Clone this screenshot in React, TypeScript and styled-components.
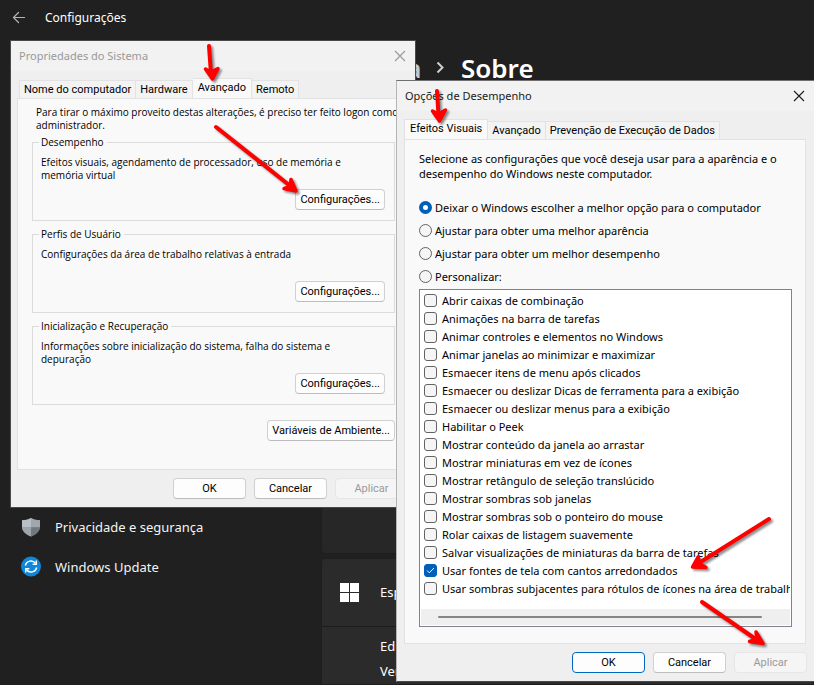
import React from "react";
import styled, { createGlobalStyle, css } from "styled-components";

const uiFont = '"Noto Sans", "Open Sans", sans-serif';
const compactFont = '"Open Sans", "Noto Sans", sans-serif';
const labelFont = 'Roboto, "Liberation Sans", sans-serif';

const GlobalStyle = createGlobalStyle`
  *, *::before, *::after { box-sizing: border-box; }
  html, body { margin: 0; background: #202020; }
  body { font-family: ${uiFont}; font-size: 11px; color: #000; }
  button, input { font: inherit; margin: 0; }
  p, h1, h2 { margin: 0; font-weight: 400; }
`;

/* ---------- desktop and settings app ---------- */

const Desktop = styled.div`
  position: relative;
  min-height: 100vh;
  overflow: hidden;
  background: #202020;
`;

const SettingsApp = styled.main`
  display: flex;
  flex-direction: column;
  height: 100vh;
  color: #fff;
`;

const SettingsBar = styled.header`
  display: flex;
  align-items: center;
  gap: 18px;
  height: 36px;
  padding-left: 11px;
`;

const BackButton = styled.button`
  display: flex;
  padding: 0;
  border: 0;
  background: none;
  color: #b4b4b4;
`;

const SettingsName = styled.h2`
  font-size: 12px;
  line-height: 16px;
`;

const SettingsBody = styled.div`
  display: grid;
  grid-template-columns: 321px 1fr;
  flex: 1;
  min-height: 0;
`;

const Sidebar = styled.nav`
  display: flex;
  flex-direction: column;
  padding: 471px 8px 0 20px;
`;

const NavLink = styled.a`
  display: flex;
  align-items: center;
  gap: 13px;
  height: 40px;
  color: #f4f4f4;
  font-size: 13px;
  text-decoration: none;
`;

const SettingsContent = styled.section`
  display: flex;
  flex-direction: column;
  min-width: 0;
  overflow: hidden;
`;

const Breadcrumb = styled.div`
  display: flex;
  align-items: center;
  height: 64px;
  font-size: 26px;
  font-weight: 600;
`;

const Crumb = styled.a`
  width: 96px;
  color: #c8c8c8;
  text-align: right;
  text-decoration: none;
`;

const CrumbArrow = styled.svg`
  margin: 0 16px 0 19px;
  color: #cfcfcf;
`;

const PageTitle = styled.h1`
  font-size: 26px;
  font-weight: 600;
`;

const Card = styled.div`
  background: #2b2b2b;
  border: 1px solid #1e1e1e;
  border-radius: 4px;
`;

const DeviceCard = styled(Card)`
  height: 457px;
  margin-bottom: 4px;
  background: #272727;
`;

const SpecCard = styled(Card)`
  flex: 1;
  border-radius: 4px 4px 0 0;
  font-size: 13px;
  line-height: 25px;
`;

const SpecHeader = styled.div`
  display: grid;
  grid-template-columns: 40px 1fr;
  align-items: center;
  height: 68px;
  padding-left: 18px;
  border-bottom: 1px solid #1c1c1c;
`;

const SpecList = styled.ul`
  margin: 0;
  padding: 7px 0 0 58px;
  list-style: none;
`;

/* ---------- classic dialogs ---------- */

const Dialog = styled.section`
  position: absolute;
  display: flex;
  flex-direction: column;
  border: 1px solid #8d8d8d;
  background: #efefef;
`;

const SystemDialog = styled(Dialog)`
  left: 10px;
  top: 40px;
  width: 406px;
  border-color: #4a4a4a;
`;

const PerformanceDialog = styled(Dialog)`
  left: 396px;
  right: -1px;
  top: 80px;
  border-color: #6f6f6f #4a4a4a #4a4a4a #b4b4b4;
`;

const TitleBar = styled.header<{ $inactive?: boolean }>`
  display: flex;
  align-items: center;
  justify-content: space-between;
  height: 30px;
  padding: 0 9px 0 8px;
  background: #f2f2f2;
  color: ${(p) => (p.$inactive ? "#999" : "#1a1a1a")};
`;

const DialogTitle = styled.h2`
  font-size: 11px;
  line-height: 16px;
`;

const CloseButton = styled.button`
  display: flex;
  padding: 0;
  border: 0;
  background: none;
  color: inherit;
`;

const TabRow = styled.div`
  display: flex;
  align-items: flex-end;
  padding: 7px 8px 0;
`;

const EffectsTabRow = styled(TabRow)`
  padding: 8px 7px 0;
`;

const Tab = styled.button<{ $selected?: boolean }>`
  height: 18px;
  padding: 0 4px;
  border: 1px solid #e2e2e2;
  border-left-width: 0;
  border-bottom: 0;
  background: #f3f3f3;
  color: #000;
  font-family: ${labelFont};
  font-size: 11px;
  line-height: 17px;
  white-space: nowrap;

  &:first-child { border-left-width: 1px; }

  ${(p) =>
    p.$selected &&
    css`
      height: 21px;
      margin-bottom: -1px;
      padding: 0 5px 3px;
      background: #f9f9f9;
    `}
`;

const TabPanel = styled.div`
  display: flex;
  flex-direction: column;
  border: 1px solid #e2e2e2;
  background: #f9f9f9;
`;

const SystemPanel = styled(TabPanel)`
  margin: 0 6px;
  padding: 6px 13px 28px 14px;
  font-family: ${compactFont};
  font-size: 10px;
  line-height: 13px;
`;

const AdminNote = styled.p`
  padding: 1px 0 4px 4px;
  white-space: nowrap;
`;

const Group = styled.fieldset`
  display: flex;
  flex-direction: column;
  min-width: 0;
  margin: 0 0 7px;
  padding: 7px 9px 10px 8px;
  border: 1px solid #dcdcdc;
`;

const GroupTitle = styled.legend`
  margin-left: -2px;
  padding: 0 3px 0 2px;
  line-height: 13px;
`;

const GroupText = styled.p`
  min-height: 33px;
  max-width: 310px;
`;

const PushButton = styled.button<{ $primary?: boolean }>`
  flex: none;
  align-self: flex-end;
  min-width: 73px;
  height: 21px;
  padding: 0 4px;
  border: 1px solid ${(p) => (p.$primary ? "#0067c0" : "#d0d0d0")};
  border-bottom-color: ${(p) => (p.$primary ? "#0067c0" : "#bcbcbc")};
  border-radius: 4px;
  background: #fdfdfd;
  color: #000;
  font-family: ${labelFont};
  font-size: 11px;
  line-height: 19px;
  white-space: nowrap;

  &:disabled {
    border-color: #e6e6e6;
    background: #f5f5f5;
    color: #9a9a9a;
  }
`;

const VariablesButton = styled(PushButton)`
  margin-top: 8px;
`;

const ButtonRow = styled.footer`
  display: flex;
  justify-content: flex-end;
  gap: 8px;
  padding: 8px 7px;
`;

const EffectsPanel = styled(TabPanel)`
  margin: 0 8px 0 7px;
  padding: 11px 13px 16px 14px;
`;

const Intro = styled.p`
  margin-bottom: 17px;
  line-height: 15px;
`;

const Options = styled.div`
  display: grid;
  gap: 5px;
  margin-bottom: 4px;
`;

const OptionLabel = styled.label`
  display: flex;
  align-items: center;
  gap: 3px;
  height: 18px;
  white-space: nowrap;
`;

const Radio = styled.input`
  appearance: none;
  flex: none;
  width: 13px;
  height: 13px;
  border: 1px solid #636363;
  border-radius: 50%;
  background: #f5f5f5;

  &:checked {
    border: 4px solid #005fb8;
    background: #fff;
  }
`;

const EffectList = styled.div`
  border: 1px solid #82828f;
  background: #fff;
`;

const EffectItems = styled.ul`
  margin: 0 1px 0 0;
  padding: 1px 0 12px 4px;
  overflow: hidden;
  list-style: none;
`;

const EffectLabel = styled(OptionLabel)`
  gap: 5px;
`;

const CheckFrame = styled.span`
  display: grid;
  flex: none;
  place-items: center;

  > * { grid-area: 1 / 1; }
`;

const Checkbox = styled.input`
  appearance: none;
  width: 13px;
  height: 13px;
  border: 1px solid #636363;
  border-radius: 3px;
  background: #f5f5f5;

  &:checked {
    border-color: #005fb8;
    background: #005fb8;
  }
`;

const CheckMark = styled.svg`
  pointer-events: none;
`;

const ScrollTrack = styled.div`
  display: flex;
  align-items: center;
  height: 16px;
  margin: 0 1px 1px;
  padding: 0 28px 0 17px;
  background: #efefef;
`;

const ScrollThumb = styled.div`
  flex: 1;
  height: 2px;
  border-radius: 1px;
  background: #858585;
`;

/* ---------- red marker arrows over the windows ---------- */

const MarkerLayer = styled.svg`
  position: absolute;
  left: 0;
  top: 0;
  pointer-events: none;
  filter: drop-shadow(2px 2px 1px rgba(0, 0, 0, 0.45));
`;

const markers = [
  { shaft: "M209 46 L211 74", head: "M205.5 69 L212.5 79 L218 68.5 L211 72 Z" },
  { shaft: "M216 127 L289 185", head: "M291 179.5 L296 191 L284 188.5 L290 186 Z" },
  { shaft: "M437 91 L438.5 116", head: "M432.5 111 L439.5 121 L445.5 110 L438.5 114 Z" },
  { shaft: "M769 519 L699 563", head: "M698 557 L692.5 567 L706 567.5 L700 564 Z" },
  { shaft: "M702 602 L757 640", head: "M756 632 L763 643.5 L749.5 641.5 L757 639 Z" },
];

const Markers = () => (
  <MarkerLayer width="814" height="685" viewBox="0 0 814 685" aria-hidden="true">
    {markers.map((m) => (
      <g key={m.shaft} stroke="#fe0000" strokeLinecap="round" strokeLinejoin="round">
        <path d={m.shaft} strokeWidth="4" fill="none" />
        <path d={m.head} strokeWidth="3.5" fill="#fe0000" />
      </g>
    ))}
  </MarkerLayer>
);

/* ---------- icons ---------- */

const BackIcon = () => (
  <svg width="16" height="14" viewBox="0 0 16 14" fill="none" stroke="currentColor" strokeWidth="1.2" strokeLinecap="round" strokeLinejoin="round">
    <path d="M13.5 6.5H2.5M7.5 1.5l-5 5 5 5" />
  </svg>
);

const CloseIcon = () => (
  <svg width="12" height="12" viewBox="0 0 12 12" fill="none" stroke="currentColor" strokeWidth="1.1">
    <path d="M1 1l10 10M11 1L1 11" />
  </svg>
);

const ShieldIcon = () => (
  <svg width="22" height="20" viewBox="0 0 22 20">
    <path d="M11 1c2.500 1.700 5.500 2.200 9 2.200V9c0 5-3.500 8.300-9 10.500C5.500 17.300 2 14 2 9V3.200C5.500 3.200 8.500 2.700 11 1z" fill="#8b9299" />
    <path d="M11 1v9.200H2V3.200C5.500 3.200 8.500 2.700 11 1z" fill="#b9bfc6" />
    <path d="M11 1c2.500 1.700 5.500 2.200 9 2.200v7h-9z" fill="#a0a6ad" />
    <path d="M11 10.200v9.300C5.800 17.400 2.300 14.500 2 10.200z" fill="#9da4ab" />
    <path d="M11 10.200h9c-.3 4.300-3.800 7.200-9 9.300z" fill="#71787f" />
  </svg>
);

const UpdateIcon = () => (
  <svg width="22" height="22" viewBox="0 0 22 22">
    <circle cx="11" cy="10.5" r="10" fill="#0f86d9" />
    <g fill="none" stroke="#fff" strokeWidth="1.4">
      <path d="M5.300 9.500A5.800 5.800 0 0 1 15.500 7.200M16.700 11.500A5.800 5.800 0 0 1 6.500 13.800" />
      <path d="M16.300 4.500v3.700h-3.700M5.700 16.500v-3.700h3.700" />
    </g>
  </svg>
);

const WindowsIcon = () => (
  <svg width="19" height="19" viewBox="0 0 19 19" fill="#fff">
    <path d="M0 0h9v9H0zM10 0h9v9h-9zM0 10h9v9H0zM10 10h9v9h-9z" />
  </svg>
);

/* ---------- data ---------- */

const groups = [
  { title: "Desempenho", text: "Efeitos visuais, agendamento de processador, uso de memória e memória virtual" },
  { title: "Perfis de Usuário", text: "Configurações da área de trabalho relativas à entrada" },
  { title: "Inicialização e Recuperação", text: "Informações sobre inicialização do sistema, falha do sistema e depuração" },
];

const modes = [
  "Deixar o Windows escolher a melhor opção para o computador",
  "Ajustar para obter uma melhor aparência",
  "Ajustar para obter um melhor desempenho",
  "Personalizar:",
];

const effects = [
  "Abrir caixas de combinação",
  "Animações na barra de tarefas",
  "Animar controles e elementos no Windows",
  "Animar janelas ao minimizar e maximizar",
  "Esmaecer itens de menu após clicados",
  "Esmaecer ou deslizar Dicas de ferramenta para a exibição",
  "Esmaecer ou deslizar menus para a exibição",
  "Habilitar o Peek",
  "Mostrar conteúdo da janela ao arrastar",
  "Mostrar miniaturas em vez de ícones",
  "Mostrar retângulo de seleção translúcido",
  "Mostrar sombras sob janelas",
  "Mostrar sombras sob o ponteiro do mouse",
  "Rolar caixas de listagem suavemente",
  "Salvar visualizações de miniaturas da barra de tarefas",
  "Usar fontes de tela com cantos arredondados",
  "Usar sombras subjacentes para rótulos de ícones na área de trabalho",
];

const checkedEffect = "Usar fontes de tela com cantos arredondados";

/* ---------- page ---------- */

const SystemProperties = () => (
  <SystemDialog role="dialog" aria-labelledby="system-title">
    <TitleBar $inactive>
      <DialogTitle id="system-title">Propriedades do Sistema</DialogTitle>
      <CloseButton aria-label="Fechar"><CloseIcon /></CloseButton>
    </TitleBar>
    <TabRow role="tablist">
      <Tab role="tab">Nome do computador</Tab>
      <Tab role="tab">Hardware</Tab>
      <Tab role="tab" aria-selected $selected>Avançado</Tab>
      <Tab role="tab">Remoto</Tab>
    </TabRow>
    <SystemPanel role="tabpanel">
      <AdminNote>
        Para tirar o máximo proveito destas alterações, é preciso ter feito logon como
        <br />
        administrador.
      </AdminNote>
      {groups.map((g) => (
        <Group key={g.title}>
          <GroupTitle>{g.title}</GroupTitle>
          <GroupText>{g.text}</GroupText>
          <PushButton>Configurações...</PushButton>
        </Group>
      ))}
      <VariablesButton>Variáveis de Ambiente...</VariablesButton>
    </SystemPanel>
    <ButtonRow>
      <PushButton>OK</PushButton>
      <PushButton>Cancelar</PushButton>
      <PushButton disabled>Aplicar</PushButton>
    </ButtonRow>
  </SystemDialog>
);

const PerformanceOptions = () => (
  <PerformanceDialog role="dialog" aria-labelledby="performance-title">
    <TitleBar>
      <DialogTitle id="performance-title">Opções de Desempenho</DialogTitle>
      <CloseButton aria-label="Fechar"><CloseIcon /></CloseButton>
    </TitleBar>
    <EffectsTabRow role="tablist">
      <Tab role="tab" aria-selected $selected>Efeitos Visuais</Tab>
      <Tab role="tab">Avançado</Tab>
      <Tab role="tab">Prevenção de Execução de Dados</Tab>
    </EffectsTabRow>
    <EffectsPanel role="tabpanel">
      <Intro>
        Selecione as configurações que você deseja usar para a aparência e o
        <br />
        desempenho do Windows neste computador.
      </Intro>
      <Options role="radiogroup">
        {modes.map((mode, i) => (
          <OptionLabel key={mode}>
            <Radio type="radio" name="mode" defaultChecked={i === 0} />
            {mode}
          </OptionLabel>
        ))}
      </Options>
      <EffectList>
        <EffectItems>
          {effects.map((effect) => (
            <li key={effect}>
              <EffectLabel>
                <CheckFrame>
                  <Checkbox type="checkbox" defaultChecked={effect === checkedEffect} />
                  {effect === checkedEffect && (
                    <CheckMark width="9" height="7" viewBox="0 0 9 7" fill="none" stroke="#fff" strokeWidth="1">
                      <path d="M1 3.500l2.300 2.300L8 1" />
                    </CheckMark>
                  )}
                </CheckFrame>
                {effect}
              </EffectLabel>
            </li>
          ))}
        </EffectItems>
        <ScrollTrack><ScrollThumb /></ScrollTrack>
      </EffectList>
    </EffectsPanel>
    <ButtonRow>
      <PushButton $primary>OK</PushButton>
      <PushButton>Cancelar</PushButton>
      <PushButton disabled>Aplicar</PushButton>
    </ButtonRow>
  </PerformanceDialog>
);

export default function App() {
  return (
    <>
      <GlobalStyle />
      <Desktop>
        <SettingsApp>
          <SettingsBar>
            <BackButton aria-label="Voltar"><BackIcon /></BackButton>
            <SettingsName>Configurações</SettingsName>
          </SettingsBar>
          <SettingsBody>
            <Sidebar>
              <NavLink href="#privacidade"><ShieldIcon />Privacidade e segurança</NavLink>
              <NavLink href="#update"><UpdateIcon />Windows Update</NavLink>
            </Sidebar>
            <SettingsContent>
              <Breadcrumb>
                <Crumb href="#sistema">Sistema</Crumb>
                <CrumbArrow width="9" height="13" viewBox="0 0 9 13" fill="none" stroke="currentColor" strokeWidth="2">
                  <path d="M1.500 1.500l5 5-5 5" />
                </CrumbArrow>
                <PageTitle>Sobre</PageTitle>
              </Breadcrumb>
              <DeviceCard />
              <SpecCard>
                <SpecHeader><WindowsIcon />Especificações do Windows</SpecHeader>
                <SpecList>
                  <li>Edição</li>
                  <li>Versão</li>
                </SpecList>
              </SpecCard>
            </SettingsContent>
          </SettingsBody>
        </SettingsApp>
        <SystemProperties />
        <PerformanceOptions />
        <Markers />
      </Desktop>
    </>
  );
}
